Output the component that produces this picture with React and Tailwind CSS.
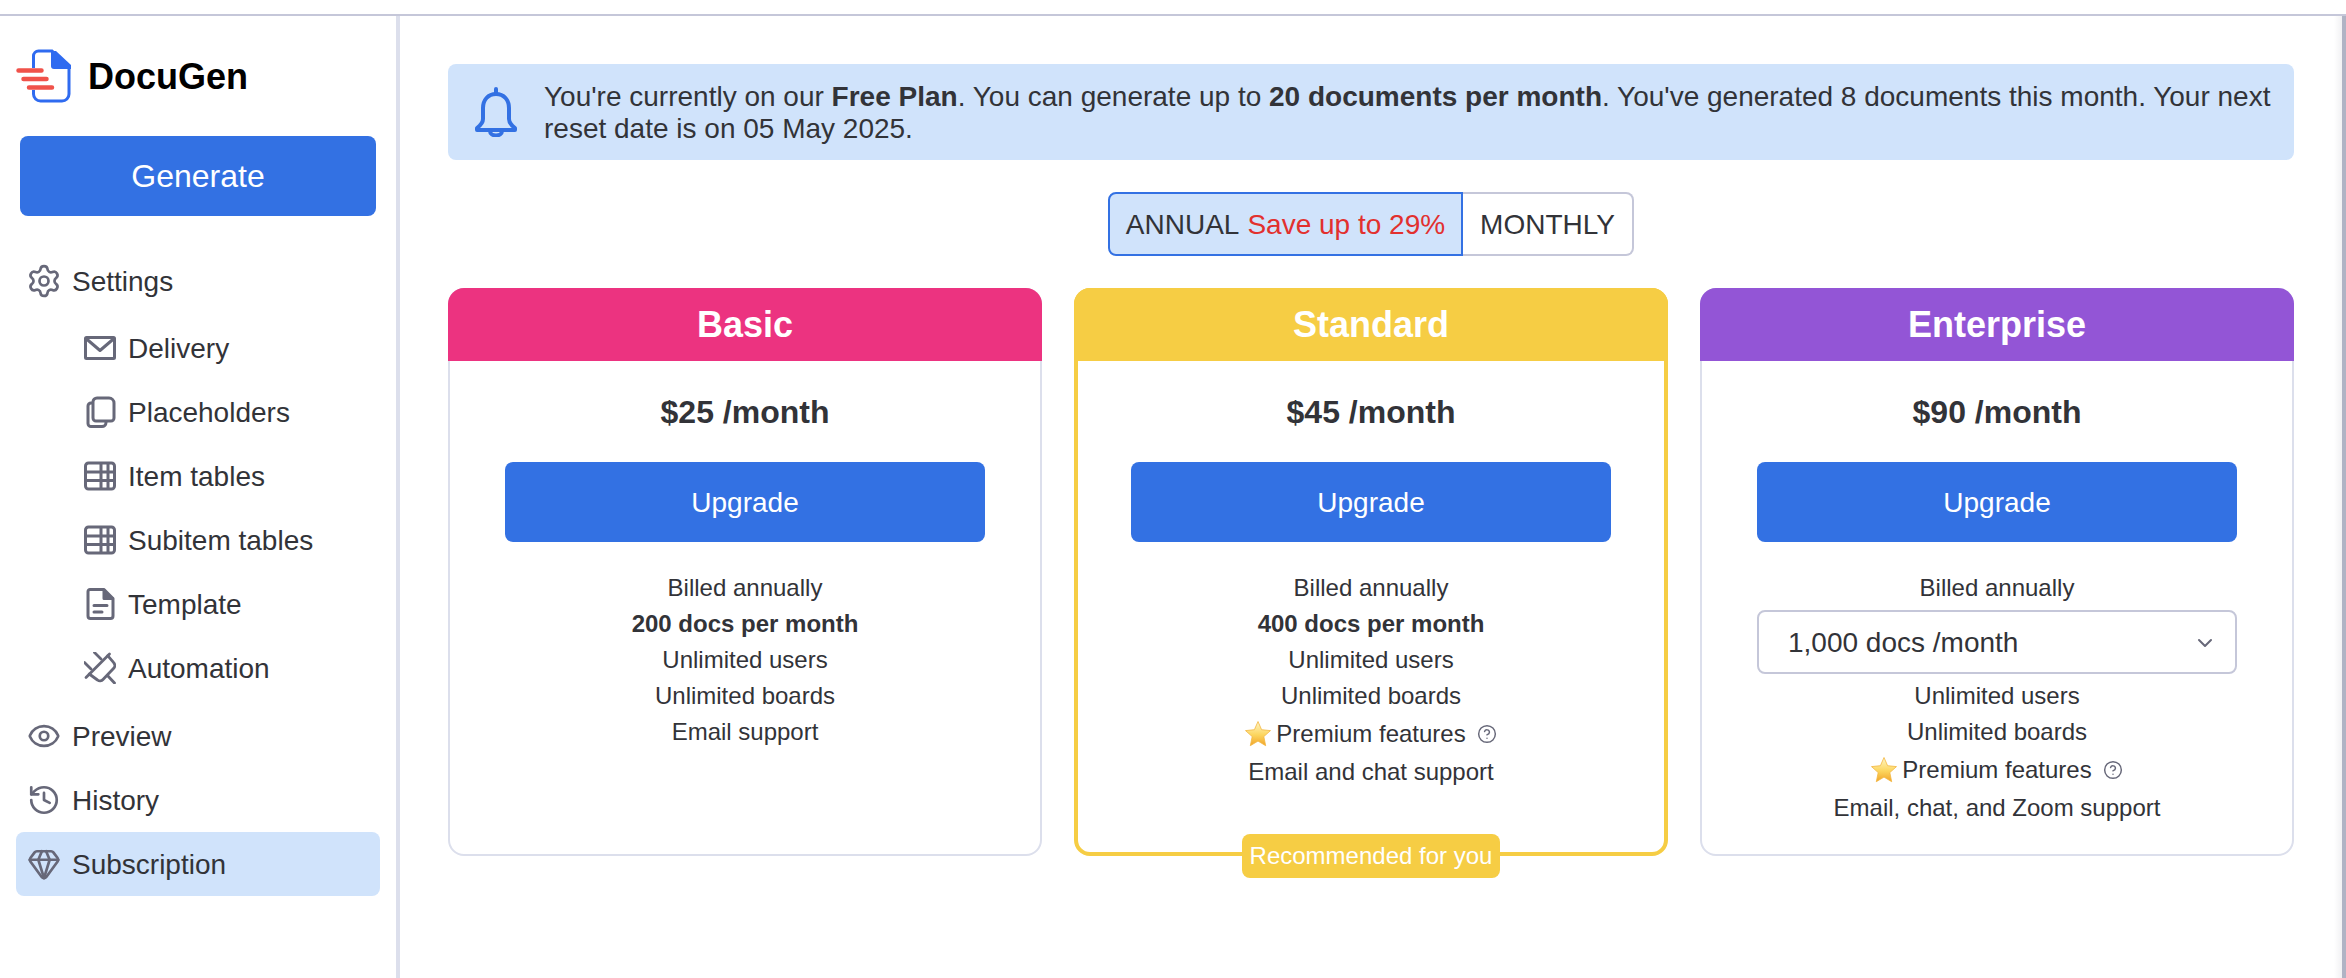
import React from 'react';
import { Settings, Eye, History, Gem, ChevronDown, CircleHelp } from 'lucide-react';

const ICON = '#676879';

function MailIcon() {
  return (
    <svg width="32" height="32" viewBox="0 0 32 32" fill="none" stroke={ICON} strokeWidth="3" strokeLinejoin="round">
      <rect x="1.500" y="5.500" width="29" height="21" rx="1" />
      <path d="M2 6.500l14 12 14-12" />
    </svg>
  );
}

function CopyIcon() {
  return (
    <svg width="32" height="32" viewBox="0 0 32 32" fill="none" stroke={ICON} strokeWidth="3" strokeLinejoin="round">
      <path d="M13 2h12a5 5 0 0 1 5 5v15a3 3 0 0 1-3 3H12a3 3 0 0 1-3-3V6a4 4 0 0 1 4-4z" />
      <path d="M9 7H7a3 3 0 0 0-3 3v17.500a3 3 0 0 0 3 3h11a4 4 0 0 0 4-4V25" />
    </svg>
  );
}

function TableIcon() {
  return (
    <svg width="32" height="32" viewBox="0 0 32 32" fill="none" stroke={ICON} strokeWidth="3">
      <rect x="1.500" y="3" width="29" height="26" rx="3" />
      <path d="M1.500 12h29M1.500 20.500h29M17 3v26M24 3v26" />
    </svg>
  );
}

function FileIcon() {
  return (
    <svg width="32" height="32" viewBox="0 0 32 32" fill="none" stroke={ICON} strokeWidth="3" strokeLinejoin="round" strokeLinecap="round">
      <path d="M6 1.500h14l9 9V28a2.500 2.500 0 0 1-2.500 2.500h-20A2.500 2.500 0 0 1 4 28V3.500a2 2 0 0 1 2-2z" />
      <path d="M20 2v8.500h8.500" fill={ICON} />
      <path d="M10 17.500h13M10 24h8" />
    </svg>
  );
}

function PlugIcon() {
  return (
    <svg width="32" height="32" viewBox="0 0 32 32" fill="none" stroke={ICON} strokeWidth="2.800" strokeLinecap="round" strokeLinejoin="round">
      <path d="M10.500 0.500L17 7" />
      <path d="M0.500 10.500L7 17" />
      <path d="M2 25.500L25.500 2" />
      <path d="M23.700 3.700l6 7a4 4 0 0 1 0 5.500L19 27.500a4 4 0 0 1-5.500 0.500L5.300 22" />
      <path d="M23.700 23.700l6.800 7.300" />
    </svg>
  );
}

function BellIcon() {
  return (
    <svg width="44" height="50" viewBox="0 0 44 50" fill="none" stroke="#3371e3" strokeWidth="4" strokeLinejoin="round" strokeLinecap="round">
      <path d="M22 2v5" />
      <path d="M22 7c-8 0-13 6-13 14v11c0 4-2 6-6 9v2h38v-2c-4-3-6-5-6-9V21c0-8-5-14-13-14z" />
      <path d="M16 44c0 3 3 4.500 6 4.500s6-1.500 6-4.500" />
    </svg>
  );
}

function Logo() {
  return (
    <svg width="56" height="54" viewBox="0 0 56 54" fill="none">
      <path d="M17.500 19V7a5 5 0 0 1 5-5H36l17 17v26a7 7 0 0 1-7 7H24.500a7 7 0 0 1-7-7v-4" stroke="#2f6bf0" strokeWidth="3" />
      <path d="M40 2h-5v15a3 3 0 0 0 3 3h17v-4z" fill="#2f6bf0" />
      <path d="M2.500 21.500h23M7.500 30h23M13 38.500h23" stroke="#f0524a" strokeWidth="4.500" strokeLinecap="round" />
    </svg>
  );
}

function Star() {
  return (
    <svg width="26" height="28" viewBox="0 0 26 28">
      <defs>
        <linearGradient id="starFill" x1="0" y1="0" x2="0" y2="1">
          <stop offset="0" stopColor="#fff6c8" />
          <stop offset="0.55" stopColor="#fcd65f" />
          <stop offset="1" stopColor="#f1a429" />
        </linearGradient>
      </defs>
      <path d="M13 1.500l3.600 8.200 8.900.9-6.700 6 1.900 9.100L13 21.100 5.300 25.700l1.900-9.100-6.700-6 8.900-.9z" fill="url(#starFill)" stroke="#f2b640" strokeWidth="0.800" strokeLinejoin="round" />
    </svg>
  );
}

function NavRow({ icon, label, sub, active }) {
  return (
    <div className={`h-16 flex items-center rounded-lg ${sub ? 'pl-[68px]' : 'pl-3'} ${active ? 'bg-[#d0e3fb]' : ''}`}>
      <span className="w-8 h-8 flex items-center justify-center shrink-0">{icon}</span>
      <span className="ml-3 pt-px text-[28px] leading-8">{label}</span>
    </div>
  );
}

function Feature({ children, tall }) {
  return <div className={`flex items-center justify-center ${tall ? 'h-10' : 'h-9'}`}>{children}</div>;
}

function Premium() {
  return (
    <Feature tall>
      <Star />
      <span className="ml-[5px]">Premium features</span>
      <CircleHelp className="ml-[11px]" size={20} color={ICON} strokeWidth={1.75} />
    </Feature>
  );
}

function PlanCard({ name, head, price, recommended, children }) {
  return (
    <div className={`relative h-[568px] rounded-2xl flex flex-col ${recommended ? 'border-4 border-[#f6cd44]' : 'border-2 border-[#dcdfec]'}`}>
      <div className={`flex items-center justify-center font-bold text-[36px] text-white rounded-t-2xl h-[73px] ${head} ${recommended ? '-mx-1 -mt-1' : '-mx-0.5 -mt-0.5'}`}>
        {name}
      </div>
      <div className={`flex flex-col items-center ${recommended ? 'px-[53px]' : 'px-[55px]'}`}>
        <div className="mt-[31px] h-10 leading-10 text-[32px] font-bold">{price} /month</div>
        <button className="mt-[30px] w-full h-20 pt-[2px] rounded-lg bg-[#3371e3] text-white text-[28px]">Upgrade</button>
        <div className="mt-7 w-full text-[24px] text-center">{children}</div>
      </div>
      {recommended && (
        <div className="absolute left-1/2 -translate-x-1/2 -bottom-[26px] h-11 w-[258px] flex items-center justify-center rounded-lg bg-[#f6cd44] text-white text-[24px]">
          Recommended for you
        </div>
      )}
    </div>
  );
}

export default function App() {
  return (
    <div className="h-screen flex flex-col overflow-hidden bg-white text-[#323338] font-['Liberation_Sans',Arial,sans-serif]">
      <div className="h-4 shrink-0 border-b-2 border-[#c5c7d9]" />
      <div className="flex flex-1 min-h-0">
        {/* Sidebar */}
        <aside className="w-[400px] shrink-0 border-r-4 border-[#dcdfec] pt-7">
          <div className="h-16 flex items-center pl-4">
            <Logo />
            <span className="ml-4 pt-[2px] text-[36px] font-bold text-black">DocuGen</span>
          </div>
          <button className="ml-5 mt-7 w-[356px] h-20 rounded-lg bg-[#3371e3] text-white text-[32px]">Generate</button>
          <nav className="mt-[33px] mx-4 w-[364px]">
            <NavRow icon={<Settings className="shrink-0" size={36} color={ICON} strokeWidth={1.8} />} label="Settings" />
            <div className="pt-[3px]">
              <NavRow sub icon={<MailIcon />} label="Delivery" />
              <NavRow sub icon={<CopyIcon />} label="Placeholders" />
              <NavRow sub icon={<TableIcon />} label="Item tables" />
              <NavRow sub icon={<TableIcon />} label="Subitem tables" />
              <NavRow sub icon={<FileIcon />} label="Template" />
              <NavRow sub icon={<PlugIcon />} label="Automation" />
            </div>
            <div className="pt-1">
              <NavRow icon={<Eye className="shrink-0" size={34} color={ICON} strokeWidth={1.9} />} label="Preview" />
              <NavRow icon={<History className="shrink-0" size={34} color={ICON} strokeWidth={1.9} />} label="History" />
              <NavRow active icon={<Gem className="shrink-0" size={34} color={ICON} strokeWidth={1.9} />} label="Subscription" />
            </div>
          </nav>
        </aside>

        {/* Main */}
        <main className="flex-1 min-w-0 pl-12 pr-10 pt-12">
          <div className="h-24 rounded-lg bg-[#d0e3fb] flex items-center pl-[26px] pr-4">
            <span className="shrink-0"><BellIcon /></span>
            <p className="ml-[26px] pt-px text-[28px] leading-8">
              You're currently on our <b>Free Plan</b>. You can generate up to <b>20 documents per month</b>. You've generated 8 documents this month. Your next reset date is on 05 May 2025.
            </p>
          </div>

          <div className="mt-8 flex justify-center">
            <div className="flex h-16 text-[28px]">
              <div className="w-[355px] pt-[2px] flex items-center justify-center rounded-l-lg border-2 border-[#3371e3] bg-[#d0e3fb]">
                ANNUAL <span className="ml-2 text-[#e2302e]">Save up to 29%</span>
              </div>
              <div className="w-[171px] pt-[2px] flex items-center justify-center rounded-r-lg border-2 border-l-0 border-[#c5c7d9]">
                MONTHLY
              </div>
            </div>
          </div>

          <div className="mt-8 grid grid-cols-3 gap-8">
            <PlanCard name="Basic" head="bg-[#ec3380]" price="$25">
              <Feature>Billed annually</Feature>
              <Feature><b>200 docs per month</b></Feature>
              <Feature>Unlimited users</Feature>
              <Feature>Unlimited boards</Feature>
              <Feature>Email support</Feature>
            </PlanCard>
            <PlanCard name="Standard" head="bg-[#f6cd44]" price="$45" recommended>
              <Feature>Billed annually</Feature>
              <Feature><b>400 docs per month</b></Feature>
              <Feature>Unlimited users</Feature>
              <Feature>Unlimited boards</Feature>
              <Premium />
              <Feature>Email and chat support</Feature>
            </PlanCard>
            <PlanCard name="Enterprise" head="bg-[#9355d6]" price="$90">
              <Feature>Billed annually</Feature>
              <div className="mt-1 h-16 pt-px flex items-center justify-between rounded-lg border-2 border-[#c5c7d9] pl-[29px] pr-[18px] text-[28px]">
                <span>1,000 docs /month</span>
                <ChevronDown size={24} color={ICON} strokeWidth={2} />
              </div>
              <div className="mt-1" />
              <Feature>Unlimited users</Feature>
              <Feature>Unlimited boards</Feature>
              <Premium />
              <Feature>Email, chat, and Zoom support</Feature>
            </PlanCard>
          </div>
        </main>

        <div className="w-3 shrink-0 bg-gradient-to-r from-white to-[#f1f1f3] border-r-4 border-[#b0b3c4]" />
      </div>
    </div>
  );
}
